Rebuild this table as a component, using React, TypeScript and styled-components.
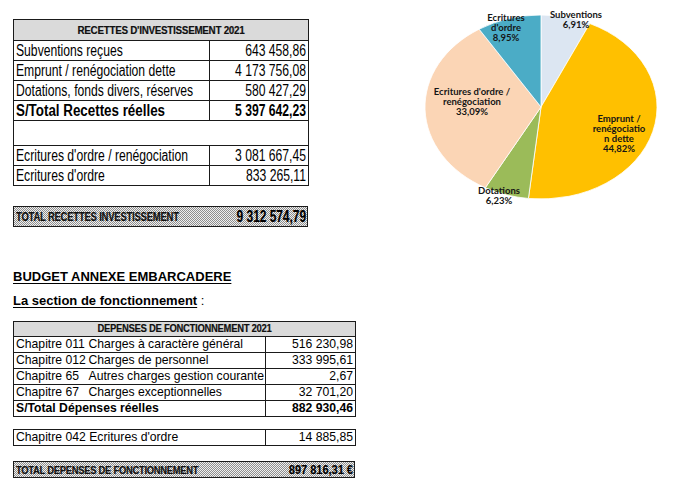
import React from 'react';
import styled, { createGlobalStyle } from 'styled-components';

const Global = createGlobalStyle`
  html, body { margin: 0; padding: 0; background: #fff; }
  body { font-family: "Liberation Sans", Arial, sans-serif; color: #000; }
`;

const halftone = (ink: string, paper: string) => `
  background: repeating-conic-gradient(${ink} 0% 25%, ${paper} 0% 50%) 0 0 / 2px 2px;
`;

const Page = styled.div`
  width: 700px;
  height: 491px;
  padding-left: 13px;
  box-sizing: border-box;
  overflow: hidden;
`;

const Top = styled.div`
  display: flex;
  align-items: flex-start;
`;

const LeftCol = styled.div`
  padding-top: 19px;
  width: 295px;
`;

/* Text squeezed horizontally to imitate a condensed face (no narrow font installed). */
const Squeeze = styled.span<{ $s: number; $align?: string }>`
  display: block;
  flex: none;
  width: calc(100% / ${(p) => p.$s});
  transform: scaleX(${(p) => p.$s});
  transform-origin: 0 50%;
  text-align: ${(p) => p.$align || 'left'};
  white-space: pre;
`;

const SqueezeRow = styled(Squeeze)`
  display: flex;
  align-items: center;
  justify-content: space-between;
`;

const Table = styled.table<{ $w: number }>`
  width: ${(p) => p.$w}px;
  border-collapse: collapse;
  table-layout: fixed;
  border: 1.5px solid #1a1a1a;
`;

const RecCell = styled.td<{ $bold?: boolean }>`
  font-size: 16px;
  height: 19px;
  padding: 0 2px 0 2px;
  line-height: 1;
  border: 1px solid #1a1a1a;
  font-weight: ${(p) => (p.$bold ? 700 : 400)};
  overflow: hidden;
`;

const HeadCell = styled.td<{ $h: number; $size: number }>`
  ${halftone('#b4b4b4', '#ffffff')}
  height: ${(p) => p.$h}px;
  padding: 0;
  font-weight: 700;
  font-size: ${(p) => p.$size}px;
  line-height: 1;
  letter-spacing: -0.2px;
  color: #111;
  text-shadow: 0.6px 0.4px 0 rgba(0, 0, 0, 0.35);
  border: 1px solid #1a1a1a;
`;

const EmptyCell = styled.td`
  height: 22px;
  border: 1px solid #1a1a1a;
`;

const TotalBar = styled.div<{ $w: number; $h: number; $mt: number }>`
  ${halftone('#8e8e8e', '#efefef')}
  width: ${(p) => p.$w}px;
  height: ${(p) => p.$h}px;
  margin-top: ${(p) => p.$mt}px;
  box-sizing: border-box;
  border: 1.5px solid #1a1a1a;
  display: flex;
  align-items: center;
  padding: 0 1px 0 2px;
  overflow: hidden;
`;

const TotalLabel = styled.span<{ $size: number }>`
  font-weight: 700;
  font-size: ${(p) => p.$size}px;
  letter-spacing: -0.2px;
  color: #111;
  text-shadow: 0.6px 0.4px 0 rgba(0, 0, 0, 0.35);
`;

const TotalValue = styled.span<{ $size: number }>`
  font-weight: 700;
  font-size: ${(p) => p.$size}px;
  text-shadow: 0.5px 0.3px 0 rgba(0, 0, 0, 0.3);
`;

const ChartSvg = styled.svg`
  display: block;
  margin-left: 112px;
  flex: none;
`;

const Heading = styled.div<{ $mt: number }>`
  margin-top: ${(p) => p.$mt}px;
  font-size: 13px;
  line-height: 16px;
  font-weight: 700;
`;

const Under = styled.span`
  text-decoration: underline;
  text-underline-offset: 2px;
`;

const Colon = styled.span`
  font-weight: 400;
`;

const DepCell = styled.td<{ $right?: boolean; $bold?: boolean }>`
  font-size: 12.2px;
  height: 15px;
  padding: 0 2px 0 2px;
  line-height: 1;
  border: 1px solid #1a1a1a;
  text-align: ${(p) => (p.$right ? 'right' : 'left')};
  font-weight: ${(p) => (p.$bold ? 700 : 400)};
  white-space: nowrap;
  overflow: hidden;
`;

const ChapCode = styled.span`
  display: inline-block;
  width: 72.5px;
`;

const Spacer = styled.div<{ $h: number }>`
  height: ${(p) => p.$h}px;
`;

type Slice = { v: number; c: string };
const slices: Slice[] = [
  { v: 6.91, c: '#dce6f2' },
  { v: 44.82, c: '#ffc000' },
  { v: 6.23, c: '#9bbb59' },
  { v: 33.09, c: '#fbd5b5' },
  { v: 8.95, c: '#4bacc6' },
];

const CX = 121;
const CY = 107;
const RX = 116;
const RY = 92;

function pt(pct: number) {
  const a = (pct / 100) * Math.PI * 2;
  return [CX + RX * Math.sin(a), CY - RY * Math.cos(a)];
}

function slicePath(start: number, end: number) {
  const [x1, y1] = pt(start);
  const [x2, y2] = pt(end);
  const large = end - start > 50 ? 1 : 0;
  return `M${CX},${CY} L${x1.toFixed(2)},${y1.toFixed(2)} A${RX},${RY} 0 ${large} 1 ${x2.toFixed(2)},${y2.toFixed(2)} Z`;
}

const labels: { x: number; lines: string[]; y: number }[] = [
  { x: 86, y: 17, lines: ['Ecritures', "d'ordre", '8,95%'] },
  { x: 156, y: 14, lines: ['Subventions', '6,91%'] },
  { x: 52, y: 91, lines: ["Ecritures d'ordre /", 'renégociation', '33,09%'] },
  { x: 199, y: 118, lines: ['Emprunt /', 'renégociatio', 'n dette', '44,82%'] },
  { x: 79, y: 190, lines: ['Dotations', '6,23%'] },
];

function Pie() {
  let acc = 0;
  const paths = slices.map((s, i) => {
    const start = acc;
    acc += s.v;
    return <path key={i} d={slicePath(start, acc)} fill={s.c} stroke="#fff" strokeWidth={0.8} />;
  });
  return (
    <ChartSvg width={240} height={212} viewBox="0 0 240 212">
      {paths}
      {labels.map((l, i) => (
        <text
          key={i}
          x={l.x}
          textAnchor="middle"
          fontFamily="Lato, 'Open Sans', sans-serif"
          fontWeight={700}
          fontSize={9.5}
          fill="#151515"
        >
          {l.lines.map((line, j) => (
            <tspan key={j} x={l.x} y={l.y + 3.5 + j * 10}>
              {line}
            </tspan>
          ))}
        </text>
      ))}
    </ChartSvg>
  );
}

const recRows: [string, string, boolean][] = [
  ['Subventions reçues', '643 458,86', false],
  ['Emprunt / renégociation dette', '4 173 756,08', false],
  ['Dotations, fonds divers, réserves', '580 427,29', false],
  ['S/Total Recettes réelles', '5 397 642,23', true],
];

const depRows: [string, string, string][] = [
  ['Chapitre 011', 'Charges à caractère général', '516 230,98'],
  ['Chapitre 012', 'Charges de personnel', '333 995,61'],
  ['Chapitre 65', 'Autres charges gestion courante', '2,67'],
  ['Chapitre 67', 'Charges exceptionnelles', '32 701,20'],
];

function RecRow({ label, value, bold }: { label: string; value: string; bold?: boolean }) {
  return (
    <tr>
      <RecCell $bold={bold}>
        <Squeeze $s={bold ? 0.835 : 0.76}>{label}</Squeeze>
      </RecCell>
      <RecCell $bold={bold}>
        <Squeeze $s={0.76} $align="right">
          {value}
        </Squeeze>
      </RecCell>
    </tr>
  );
}

export default function App() {
  return (
    <Page>
      <Global />
      <Top>
        <LeftCol>
          <Table $w={295}>
            <colgroup>
              <col style={{ width: 196 }} />
              <col style={{ width: 99 }} />
            </colgroup>
            <tbody>
              <tr>
                <HeadCell colSpan={2} $h={20} $size={11}>
                  <Squeeze $s={0.88} $align="center">
                    RECETTES D'INVESTISSEMENT 2021
                  </Squeeze>
                </HeadCell>
              </tr>
              {recRows.map(([l, v, b]) => (
                <RecRow key={l} label={l} value={v} bold={b} />
              ))}
              <tr>
                <EmptyCell colSpan={2} />
              </tr>
              <RecRow label="Ecritures d'ordre / renégociation" value="3 081 667,45" />
              <RecRow label="Ecritures d'ordre" value="833 265,11" />
            </tbody>
          </Table>
          <TotalBar $w={295} $h={21} $mt={20}>
            <SqueezeRow $s={0.72}>
              <TotalLabel $size={13}>TOTAL RECETTES INVESTISSEMENT</TotalLabel>
              <TotalValue $size={16.5}>9 312 574,79</TotalValue>
            </SqueezeRow>
          </TotalBar>
        </LeftCol>
        <Pie />
      </Top>

      <Heading $mt={42}>
        <Under>BUDGET ANNEXE EMBARCADERE</Under>
      </Heading>
      <Heading $mt={8}>
        <Under>La section de fonctionnement</Under> <Colon>:</Colon>
      </Heading>
      <Spacer $h={12} />
      <Table $w={342}>
        <colgroup>
          <col style={{ width: 252 }} />
          <col style={{ width: 90 }} />
        </colgroup>
        <tbody>
          <tr>
            <HeadCell colSpan={2} $h={14} $size={10}>
              <Squeeze $s={0.93} $align="center">
                DEPENSES DE FONCTIONNEMENT 2021
              </Squeeze>
            </HeadCell>
          </tr>
          {depRows.map(([code, l, v]) => (
            <tr key={code}>
              <DepCell>
                <ChapCode>{code}</ChapCode>
                {l}
              </DepCell>
              <DepCell $right>{v}</DepCell>
            </tr>
          ))}
          <tr>
            <DepCell $bold>S/Total Dépenses réelles</DepCell>
            <DepCell $right $bold>
              882 930,46
            </DepCell>
          </tr>
        </tbody>
      </Table>
      <Spacer $h={12} />
      <Table $w={342}>
        <colgroup>
          <col style={{ width: 252 }} />
          <col style={{ width: 90 }} />
        </colgroup>
        <tbody>
          <tr>
            <DepCell>Chapitre 042 Ecritures d'ordre</DepCell>
            <DepCell $right>14 885,85</DepCell>
          </tr>
        </tbody>
      </Table>
      <TotalBar $w={342} $h={17} $mt={15}>
        <SqueezeRow $s={0.88}>
          <TotalLabel $size={10.5}>TOTAL DEPENSES DE FONCTIONNEMENT</TotalLabel>
          <TotalValue $size={12.5}>897 816,31 €</TotalValue>
        </SqueezeRow>
      </TotalBar>
    </Page>
  );
}
